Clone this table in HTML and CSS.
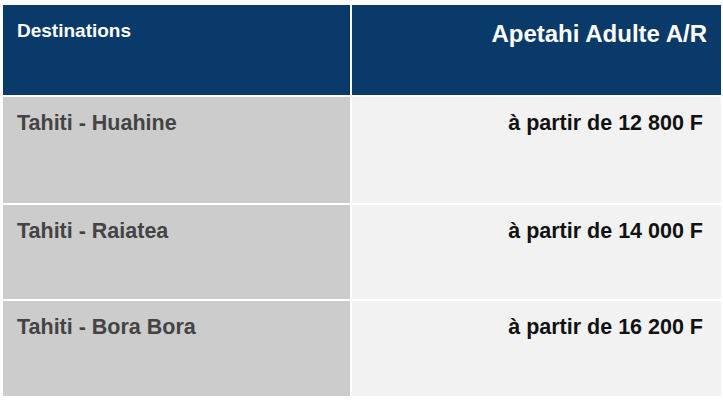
FILE: index.html
```html
<!DOCTYPE html>
<html lang="fr">
<head>
<meta charset="utf-8">
<title>Tarifs</title>
<link rel="stylesheet" href="styles.css">
</head>
<body>
<table class="fares">
  <thead>
    <tr class="head-row">
      <th class="col-dest">Destinations</th>
      <th class="col-price">Apetahi Adulte A/R</th>
    </tr>
  </thead>
  <tbody>
    <tr class="row row-1">
      <td class="dest">Tahiti - Huahine</td>
      <td class="price">à partir de 12 800 F</td>
    </tr>
    <tr class="row row-2">
      <td class="dest">Tahiti - Raiatea</td>
      <td class="price">à partir de 14 000 F</td>
    </tr>
    <tr class="row row-3">
      <td class="dest">Tahiti - Bora Bora</td>
      <td class="price">à partir de 16 200 F</td>
    </tr>
  </tbody>
</table>
</body>
</html>
```
FILE: styles.css
```css
html, body {
  margin: 0;
  background: #ffffff;
}
body {
  padding: 3px 0 0 1px;
  font-family: "Liberation Sans", Arial, sans-serif;
}
.fares {
  width: 722px;
  border-collapse: separate;
  border-spacing: 2px;
  table-layout: fixed;
}
.fares th,
.fares td {
  vertical-align: top;
  font-weight: bold;
  box-sizing: border-box;
}
.head-row {
  height: 90px;
}
.head-row th {
  background: #0a3a69;
  color: #ffffff;
  padding: 15px 14px 0 14px;
}
.col-dest {
  width: 347px;
  text-align: left;
  font-size: 19px;
}
.col-price {
  text-align: right;
  font-size: 24px;
}
.row td {
  padding: 14px 18px 0 14px;
  font-size: 21.5px;
}
.row-1 { height: 106px; }
.row-2 { height: 94px; }
.row-3 { height: 95px; }
.dest {
  background: #cccccc;
  color: #444444;
  text-align: left;
}
.price {
  background: #f2f2f2;
  color: #111111;
  text-align: right;
}
```
